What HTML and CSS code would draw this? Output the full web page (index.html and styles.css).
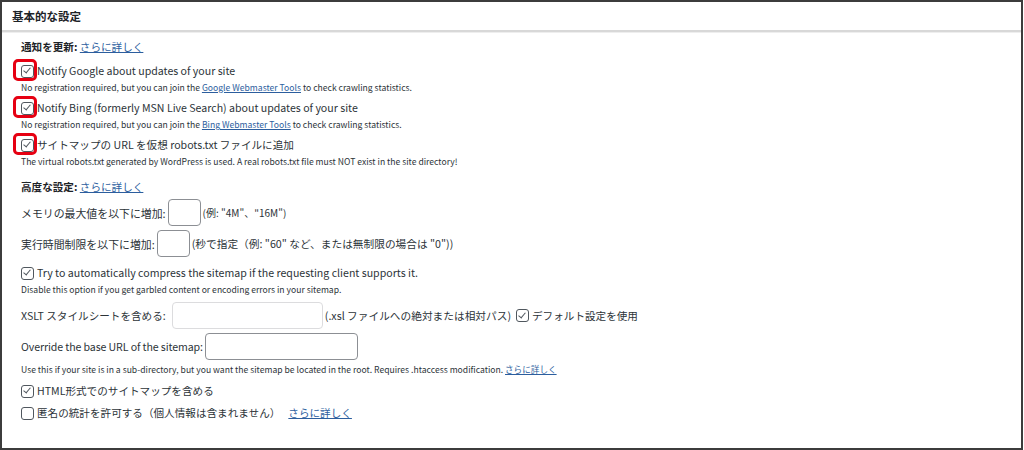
FILE: index.html
```html
<!DOCTYPE html>
<html lang="ja">
<head>
<meta charset="utf-8">
<link rel="stylesheet" href="styles.css">
</head>
<body>
<div class="frame">
  <div class="header">基本的な設定</div>
  <div class="content">
    <div class="title"><b>通知を更新:</b> <a href="#">さらに詳しく</a></div>

    <div class="opt first">
      <div class="row"><span class="cb checked hl"></span>Notify Google about updates of your site</div>
      <div class="desc">No registration required, but you can join the <a href="#">Google Webmaster Tools</a> to check crawling statistics.</div>
    </div>
    <div class="opt">
      <div class="row"><span class="cb checked hl"></span>Notify Bing (formerly MSN Live Search) about updates of your site</div>
      <div class="desc">No registration required, but you can join the <a href="#">Bing Webmaster Tools</a> to check crawling statistics.</div>
    </div>
    <div class="opt">
      <div class="row"><span class="cb checked hl"></span>サイトマップの URL を仮想 robots.txt ファイルに追加</div>
      <div class="desc">The virtual robots.txt generated by WordPress is used. A real robots.txt file must NOT exist in the site directory!</div>
    </div>

    <div class="title adv"><b>高度な設定:</b> <a href="#">さらに詳しく</a></div>

    <div class="field mem"><span class="lbl">メモリの最大値を以下に増加:</span><span class="input small"></span><span class="note">(例: "4M"、"16M")</span></div>
    <div class="field exec"><span class="lbl">実行時間制限を以下に増加:</span><span class="input small"></span><span class="note wide-note">(秒で指定（例: "60" など、または無制限の場合は "0"))</span></div>

    <div class="opt gz">
      <div class="row"><span class="cb checked"></span>Try to automatically compress the sitemap if the requesting client supports it.</div>
      <div class="desc">Disable this option if you get garbled content or encoding errors in your sitemap.</div>
    </div>

    <div class="field xslt"><span>XSLT スタイルシートを含める:</span><span class="input wide"></span><span class="note wide-note">(.xsl ファイルへの絶対または相対パス)</span><span class="cb checked"></span>デフォルト設定を使用</div>
    <div class="field base"><span class="cond">Override the base URL of the sitemap:</span><span class="input wide2"></span></div>
    <div class="desc use">Use this if your site is in a sub-directory, but you want the sitemap be located in the root. Requires .htaccess modification. <a href="#">さらに詳しく</a></div>

    <div class="row html"><span class="cb checked"></span>HTML形式でのサイトマップを含める</div>
    <div class="row anon"><span class="cb"></span>匿名の統計を許可する（個人情報は含まれません） <a href="#" class="more">さらに詳しく</a></div>
  </div>
</div>
</body>
</html>
```

FILE: styles.css
```css
html, body {
  margin: 0;
  padding: 0;
  background: #fff;
}
body {
  font-family: "Noto Sans CJK JP", "Noto Sans", sans-serif;
  color: #2c3338;
  font-size: 10.6px;
}
.frame {
  width: 1023px;
  height: 450px;
  box-sizing: border-box;
  border: 2px solid #3c3c3c;
}
.header {
  height: 28px;
  line-height: 28px;
  padding-left: 10px;
  font-size: 11.5px;
  font-weight: bold;
  color: #1d2327;
  border-bottom: 2px solid #d8d8d8;
  box-shadow: 0 1px 0 #eee;
}
.content {
  padding: 6px 0 0 17px;
}
a {
  color: #2c5e9e;
  text-decoration: underline;
}
.title {
  height: 18px;
  line-height: 18px;
  padding-left: 2px;
}
.title b {
  font-weight: bold;
  color: #1d2327;
}
.row {
  height: 18px;
  line-height: 18px;
  display: flex;
  align-items: center;
  white-space: nowrap;
}
.desc {
  height: 14px;
  line-height: 14px;
  font-size: 8.6px;
  white-space: nowrap;
  padding-left: 2px;
}
.opt.first { margin-top: 6px; }
.opt { margin-top: 5px; }
.title.adv { margin-top: 10px; }
.field {
  display: flex;
  align-items: center;
  white-space: nowrap;
  height: 27px;
  padding-left: 2px;
}
.lbl { font-size: 10.9px; }
.cond { letter-spacing: -0.1px; }
.field.mem { margin-top: 3px; }
.field.exec { margin-top: 4px; }
.opt.gz { margin-top: 7px; }
.field.xslt { margin-top: 6px; }
.field.base { margin-top: 4px; }
.desc.use { margin-top: 2px; }
.row.html { margin-top: 6px; }
.row.anon { margin-top: 4px; }

.input {
  display: inline-block;
  box-sizing: border-box;
  height: 27px;
  border: 1px solid #8c8f94;
  border-radius: 4px;
  background: #fff;
  margin: 0 2px 0 2px;
}
.input.small { width: 33px; }
.input.wide { width: 151px; border-color: #dcdcde; margin-left: 6px; }
.input.wide2 { width: 153px; }
.note {
  font-size: 10px;
  margin-right: 3px;
}
.note.wide-note { font-size: 10.7px; }
.cb {
  position: relative;
  display: inline-block;
  box-sizing: border-box;
  width: 13px;
  height: 13px;
  border: 1.5px solid #50575e;
  border-radius: 3px;
  margin: 0 3px 0 2px;
  flex: none;
}
.cb.checked::before {
  content: "";
  position: absolute;
  left: 3px;
  top: 0.5px;
  width: 3px;
  height: 6px;
  border: solid #50575e;
  border-width: 0 1.3px 1.3px 0;
  transform: rotate(40deg);
}
.cb.hl::after {
  content: "";
  position: absolute;
  left: -9px;
  top: -7px;
  width: 24px;
  height: 22px;
  box-sizing: border-box;
  border: 3px solid #e60012;
  border-radius: 5px;
}
.more { margin-left: 8px; }
```
